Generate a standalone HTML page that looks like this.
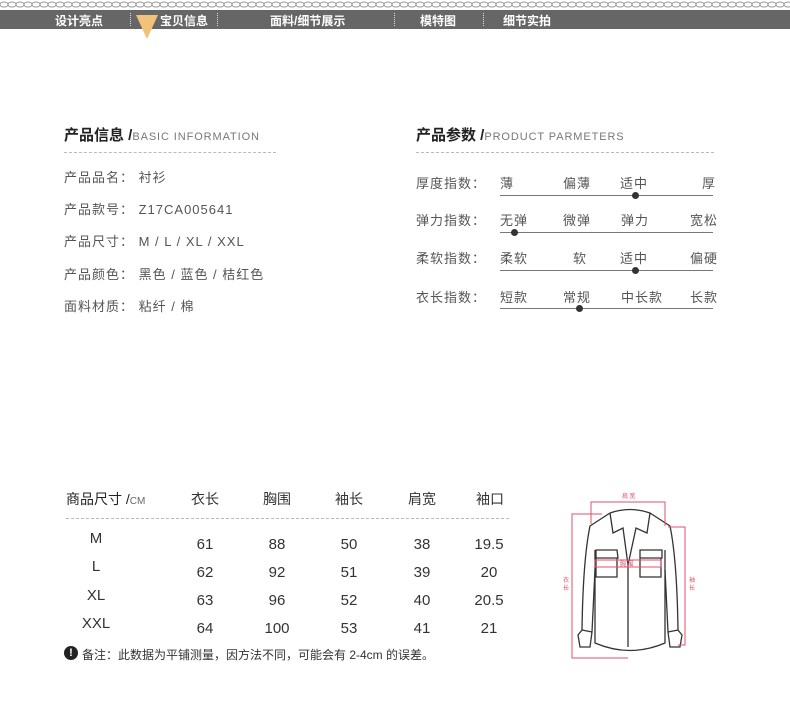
<!DOCTYPE html>
<html><head><meta charset="utf-8"><style>
*{margin:0;padding:0;box-sizing:border-box}
body{width:790px;height:701px;background:#fff;position:relative;overflow:hidden;font-family:"Liberation Sans","Noto Sans CJK SC",sans-serif;color:#555}
.a{position:absolute;white-space:nowrap}
.nav{position:absolute;left:0;top:10px;width:790px;height:19px;background:#666}
.nav span{position:absolute;top:2px;color:#fff;font-size:12px;font-weight:bold}
.sep{position:absolute;top:3px;height:13px;border-left:1px dotted #ddd}
.h{font-size:15px;font-weight:bold;color:#222}
.h small{font-size:11px;font-weight:normal;color:#777;letter-spacing:.9px}
.dash{position:absolute;height:0;border-top:1px dashed #bbb}
.t{font-size:13px;color:#555;letter-spacing:1px}
.line{position:absolute;left:500px;width:213px;height:1px;background:#777}
.dot{position:absolute;width:7px;height:7px;border-radius:50%;background:#333}
.c{position:absolute;font-size:15px;color:#333;transform:translateX(-50%)}
</style></head><body>
<svg class="a" style="left:0;top:0" width="790" height="9"><defs><pattern id="p" width="8" height="9" patternUnits="userSpaceOnUse"><ellipse cx="4" cy="4.5" rx="4" ry="2.5" fill="none" stroke="#999" stroke-width="1"/></pattern></defs><rect width="790" height="9" fill="url(#p)"/></svg>
<div class="nav">
<span style="left:55px">设计亮点</span><div class="sep" style="left:130px"></div>
<span style="left:160px">宝贝信息</span><div class="sep" style="left:217px"></div>
<span style="left:270px">面料/细节展示</span><div class="sep" style="left:394px"></div>
<span style="left:420px">模特图</span><div class="sep" style="left:483px"></div>
<span style="left:503px">细节实拍</span>
</div>
<svg class="a" style="left:136px;top:15px" width="24" height="25"><polygon points="0,0 22,0 11,24" fill="#f2c27a"/></svg>

<div class="a h" style="left:64px;top:124px">产品信息 /<small>BASIC INFORMATION</small></div>
<div class="dash" style="left:64px;top:152px;width:212px"></div>
<div class="a t" style="left:64px;top:167px">产品品名：&nbsp;衬衫</div>
<div class="a t" style="left:64px;top:199px">产品款号：&nbsp;Z17CA005641</div>
<div class="a t" style="left:64px;top:231px">产品尺寸：&nbsp;M / L / XL / XXL</div>
<div class="a t" style="left:64px;top:264px">产品颜色：&nbsp;黑色 / 蓝色 / 桔红色</div>
<div class="a t" style="left:64px;top:296px">面料材质：&nbsp;粘纤 / 棉</div>

<div class="a h" style="left:416px;top:124px">产品参数 /<small>PRODUCT PARMETERS</small></div>
<div class="dash" style="left:416px;top:152px;width:298px"></div>

<div class="a t" style="left:416px;top:173px">厚度指数：</div>
<div class="a t" style="left:500px;top:173px">薄</div><div class="a t" style="left:563px;top:173px">偏薄</div><div class="a t" style="left:620px;top:173px">适中</div><div class="a t" style="left:702px;top:173px">厚</div>
<div class="line" style="top:195px"></div><div class="dot" style="left:632px;top:192px"></div>

<div class="a t" style="left:416px;top:210px">弹力指数：</div>
<div class="a t" style="left:500px;top:210px">无弹</div><div class="a t" style="left:563px;top:210px">微弹</div><div class="a t" style="left:621px;top:210px">弹力</div><div class="a t" style="left:690px;top:210px">宽松</div>
<div class="line" style="top:232px"></div><div class="dot" style="left:511px;top:229px"></div>

<div class="a t" style="left:416px;top:248px">柔软指数：</div>
<div class="a t" style="left:500px;top:248px">柔软</div><div class="a t" style="left:573px;top:248px">软</div><div class="a t" style="left:620px;top:248px">适中</div><div class="a t" style="left:690px;top:248px">偏硬</div>
<div class="line" style="top:270px"></div><div class="dot" style="left:632px;top:267px"></div>

<div class="a t" style="left:416px;top:287px">衣长指数：</div>
<div class="a t" style="left:500px;top:287px">短款</div><div class="a t" style="left:563px;top:287px">常规</div><div class="a t" style="left:621px;top:287px">中长款</div><div class="a t" style="left:690px;top:287px">长款</div>
<div class="line" style="top:308px"></div><div class="dot" style="left:576px;top:305px"></div>

<div class="a" style="left:66px;top:489px;font-size:14px;color:#222">商品尺寸 /<span style="font-size:10px;color:#666">CM</span></div>
<div class="c" style="left:205px;top:489px;font-size:14px">衣长</div>
<div class="c" style="left:277px;top:489px;font-size:14px">胸围</div>
<div class="c" style="left:349px;top:489px;font-size:14px">袖长</div>
<div class="c" style="left:422px;top:489px;font-size:14px">肩宽</div>
<div class="c" style="left:490px;top:489px;font-size:14px">袖口</div>
<div class="dash" style="left:66px;top:518px;width:443px"></div>

<div class="c" style="left:96px;top:530px">M</div><div class="c" style="left:96px;top:558px">L</div><div class="c" style="left:96px;top:587px">XL</div><div class="c" style="left:96px;top:615px">XXL</div>
<div class="c" style="left:205px;top:536px">61</div><div class="c" style="left:277px;top:536px">88</div><div class="c" style="left:349px;top:536px">50</div><div class="c" style="left:422px;top:536px">38</div><div class="c" style="left:489px;top:536px">19.5</div>
<div class="c" style="left:205px;top:564px">62</div><div class="c" style="left:277px;top:564px">92</div><div class="c" style="left:349px;top:564px">51</div><div class="c" style="left:422px;top:564px">39</div><div class="c" style="left:489px;top:564px">20</div>
<div class="c" style="left:205px;top:592px">63</div><div class="c" style="left:277px;top:592px">96</div><div class="c" style="left:349px;top:592px">52</div><div class="c" style="left:422px;top:592px">40</div><div class="c" style="left:489px;top:592px">20.5</div>
<div class="c" style="left:205px;top:620px">64</div><div class="c" style="left:277px;top:620px">100</div><div class="c" style="left:349px;top:620px">53</div><div class="c" style="left:422px;top:620px">41</div><div class="c" style="left:489px;top:620px">21</div>

<div class="a" style="left:64px;top:646px;width:14px;height:14px;border-radius:50%;background:#222;color:#fff;font-size:11px;font-weight:bold;text-align:center;line-height:14px">!</div>
<div class="a" style="left:82px;top:646px;font-size:12px;color:#333">备注：此数据为平铺测量，因方法不同，可能会有 2-4cm 的误差。</div>

<svg class="a" style="left:550px;top:480px" width="160" height="180" viewBox="0 0 160 180">
<g fill="none" stroke="#333" stroke-width="1.3">
<path d="M60 33 L40 46 Q33 80 32 150 L28 155 L30 167 L40 167 L42 152 Q44 110 45 90"/>
<path d="M100 33 L120 46 Q127 80 128 150 L132 155 L130 167 L120 167 L118 152 Q116 110 115 90"/>
<path d="M45 70 L45 163 Q80 178 115 163 L115 70"/>
<path d="M60 33 L63 53 L73 48 L78 85 L86 48 L97 53 L100 33 Q80 26 60 33"/>
<path d="M78 85 L78 167"/>
<path d="M46 70 L67 70 L68 78 L46 78 Z M46 78 L46 97 L67 97 L67 78"/>
<path d="M90 70 L112 70 L112 78 L90 78 Z M90 78 L90 97 L111 97 L111 78"/>
<path d="M32 150 L42 152 M128 150 L118 152"/>
</g>
<g fill="none" stroke="#e0506a" stroke-width="1">
<path d="M41 44 L41 22 L115 22 L115 46"/>
<path d="M52 34 L22 34 L22 178 L78 178"/>
<path d="M118 47 L135 47 L135 165 L128 165"/>
<rect x="45" y="80" width="66" height="7"/>
</g>
<g fill="#e0506a" font-size="6" font-family="Noto Sans CJK SC,sans-serif">
<text x="72" y="18">肩 宽</text><text x="70" y="86">胸 围</text>
<text x="13" y="102">衣</text><text x="13" y="110">长</text>
<text x="139" y="102">袖</text><text x="139" y="110">长</text>
</g>
</svg>
</body></html>
